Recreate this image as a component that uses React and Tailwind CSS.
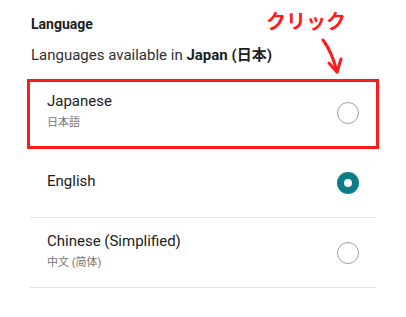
import React from "react";

const languages = [
  { id: "ja", name: "Japanese", native: "日本語", selected: false },
  { id: "en", name: "English", native: null, selected: true },
  { id: "zh", name: "Chinese (Simplified)", native: "中文 (简体)", selected: false },
];

function Radio({ checked }) {
  if (checked) {
    return (
      <div className="w-[22px] h-[22px] rounded-full bg-[#0b7d88] flex items-center justify-center shrink-0">
        <div className="w-[8px] h-[8px] rounded-full bg-white" />
      </div>
    );
  }
  return (
    <div className="w-[22px] h-[22px] rounded-full border border-[#a0a0a0] shrink-0" />
  );
}

function App() {
  return (
    <div className="relative w-[406px] h-[317px] overflow-hidden bg-white font-['Roboto','Noto_Sans_CJK_JP',sans-serif] text-[#212121]">
      <div className="pt-[14px] px-[31px]">
        <h3 className="text-[14px] leading-[20px] font-bold">Language</h3>
        <p className="mt-[11px] text-[15px] leading-[20px] text-[#303030]">
          Languages available in <span className="font-bold text-[#212121]">Japan (日本)</span>
        </p>
      </div>

      <ul className="mt-[13px] mx-[30px]">
        {languages.map((lang) => (
          <li
            key={lang.id}
            className="h-[70px] flex items-center justify-between pl-[17px] pr-[17px] border-b border-[#e3e3e3]"
          >
            <div className="pb-[4px]">
              <div className="text-[15px] leading-[20px]">{lang.name}</div>
              {lang.native && (
                <div
                  className={`mt-[5px] text-[11px] leading-[14px] text-[#757575] ${
                    lang.id === "zh" ? "font-['Roboto','Noto_Sans_CJK_SC',sans-serif]" : ""
                  }`}
                >
                  {lang.native}
                </div>
              )}
            </div>
            <Radio checked={lang.selected} />
          </li>
        ))}
      </ul>

      {/* annotation */}
      <div className="absolute left-[27px] top-[79px] w-[352px] h-[70px] border-[3px] border-[#ff1a1a]" />
      <span className="absolute left-[266px] top-[11px] text-[20px] leading-[20px] font-bold text-[#ff1a1a] font-['Noto_Sans_CJK_JP',sans-serif]">
        クリック
      </span>
      <svg
        className="absolute left-[315px] top-[36px]"
        width="32"
        height="40"
        viewBox="0 0 32 40"
        fill="none"
        stroke="#ff1a1a"
        strokeWidth="3"
        strokeLinecap="round"
        strokeLinejoin="round"
      >
        <path d="M8 4 Q17 16 22 36" />
        <path d="M14 27 L22 36 L26 23" />
      </svg>
    </div>
  );
}

export default App;
